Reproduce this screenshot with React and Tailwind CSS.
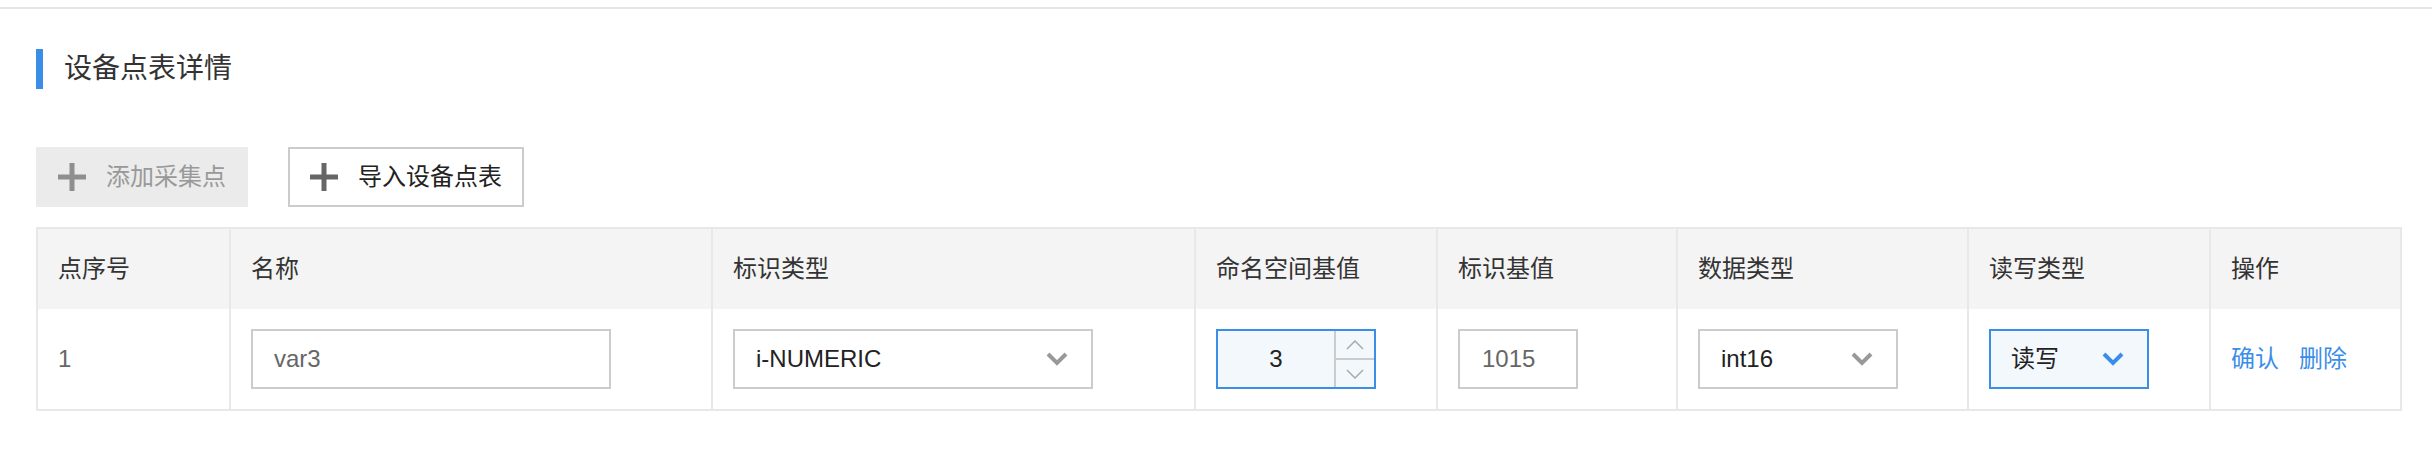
import React from "react";

const blue = "#3b8ee8";

const Plus = ({ color }) => (
  <svg width="28" height="28" viewBox="0 0 28 28">
    <rect x="11.5" y="0" width="5" height="28" fill={color} />
    <rect x="0" y="11.5" width="28" height="5" fill={color} />
  </svg>
);

const Chevron = ({ color }) => (
  <svg width="22" height="14" viewBox="0 0 22 14">
    <polyline
      points="2,2 11,11 20,2"
      fill="none"
      stroke={color}
      strokeWidth="4"
      strokeLinecap="butt"
    />
  </svg>
);

const SpinArrow = ({ up }) => (
  <svg width="18" height="10" viewBox="0 0 18 10">
    <polyline
      points={up ? "1,9 9,1 17,9" : "1,1 9,9 17,1"}
      fill="none"
      stroke="#aaa"
      strokeWidth="1.5"
    />
  </svg>
);

const columns = [
  "点序号",
  "名称",
  "标识类型",
  "命名空间基值",
  "标识基值",
  "数据类型",
  "读写类型",
  "操作",
];

const widths = [
  "w-[191px]",
  "w-[482px]",
  "w-[483px]",
  "w-[242px]",
  "w-[240px]",
  "w-[291px]",
  "w-[242px]",
  "w-[191px]",
];

const App = () => {
  const cells = [
    <span className="text-[#666]">1</span>,
    <div className="w-[360px] h-[60px] border-2 border-[#ccc] flex items-center pl-[21px] text-[#666]">
      var3
    </div>,
    <div className="w-[360px] h-[60px] border-2 border-[#ccc] flex items-center justify-between pl-[21px] pr-[23px] text-[#222]">
      <span>i-NUMERIC</span>
      <Chevron color="#999" />
    </div>,
    <div className="w-[160px] h-[60px] border-2 border-[#3b8ee8] bg-[#f3f8fd] flex">
      <div className="flex-1 flex items-center justify-center text-[#222]">3</div>
      <div className="w-[40px] border-l-2 border-[#ccc] flex flex-col">
        <div className="flex-1 flex items-center justify-center border-b-2 border-[#ccc]">
          <SpinArrow up />
        </div>
        <div className="flex-1 flex items-center justify-center">
          <SpinArrow />
        </div>
      </div>
    </div>,
    <div className="w-[120px] h-[60px] border-2 border-[#ccc] flex items-center pl-[22px] text-[#666]">
      1015
    </div>,
    <div className="w-[200px] h-[60px] border-2 border-[#ccc] flex items-center justify-between pl-[21px] pr-[23px] text-[#222]">
      <span>int16</span>
      <Chevron color="#999" />
    </div>,
    <div className="w-[160px] h-[60px] border-2 border-[#3b8ee8] bg-[#f3f8fd] flex items-center justify-between pl-[20px] pr-[23px] text-[#222]">
      <span>读写</span>
      <Chevron color={blue} />
    </div>,
    <div className="flex gap-[20px] text-[#3b8ee8]">
      <span>确认</span>
      <span>删除</span>
    </div>,
  ];

  return (
    <div
      className="w-[2432px] h-[458px] bg-white text-[24px] text-[#333]"
      style={{ fontFamily: '"Liberation Sans", "Noto Sans CJK SC", sans-serif' }}
    >
      <div className="pt-[7px]">
        <div className="border-t-2 border-[#e6e6e6]" />
      </div>
      <div className="px-[36px]">
        <div className="mt-[40px] flex items-center h-[40px]">
          <div className="w-[7px] h-[40px] bg-[#3b8ee8]" />
          <h2 className="ml-[21px] text-[28px] text-[#333] leading-none">
            设备点表详情
          </h2>
        </div>

        <div className="mt-[58px] flex gap-[40px]">
          <button className="w-[212px] h-[60px] bg-[#ebebeb] flex items-center pl-[22px] gap-[20px] text-[#999]">
            <Plus color="#8f8f8f" />
            <span>添加采集点</span>
          </button>
          <button className="w-[236px] h-[60px] border-2 border-[#ccc] bg-white flex items-center pl-[20px] gap-[20px] text-[#222]">
            <Plus color="#666" />
            <span>导入设备点表</span>
          </button>
        </div>

        <div className="mt-[20px] w-[2366px] border-2 border-[#e8e8e8]">
          <div className="flex h-[80px] bg-[#f4f4f4]">
            {columns.map((c, i) => (
              <div
                key={c}
                className={`${widths[i]} ${
                  i > 0 ? "border-l-2 border-[#e8e8e8]" : ""
                } flex items-center pl-[20px] text-[#333]`}
              >
                {c}
              </div>
            ))}
          </div>
          <div className="flex h-[100px]">
            {cells.map((cell, i) => (
              <div
                key={i}
                className={`${widths[i]} ${
                  i > 0 ? "border-l-2 border-[#e8e8e8]" : ""
                } flex items-center pl-[20px]`}
              >
                {cell}
              </div>
            ))}
          </div>
        </div>
      </div>
    </div>
  );
};

export default App;
